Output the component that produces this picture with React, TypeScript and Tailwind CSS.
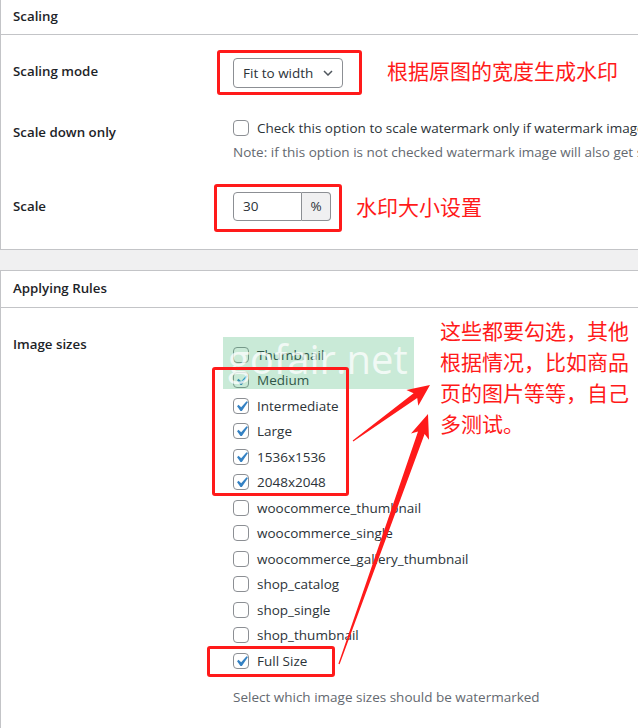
import React from "react";

const sizes = [
  { label: "Thumbnail", checked: false },
  { label: "Medium", checked: true },
  { label: "Intermediate", checked: true },
  { label: "Large", checked: true },
  { label: "1536x1536", checked: true },
  { label: "2048x2048", checked: true },
  { label: "woocommerce_thumbnail", checked: false },
  { label: "woocommerce_single", checked: false },
  { label: "woocommerce_gallery_thumbnail", checked: false },
  { label: "shop_catalog", checked: false },
  { label: "shop_single", checked: false },
  { label: "shop_thumbnail", checked: false },
  { label: "Full Size", checked: true },
];

const Checkbox = ({ checked }: { checked: boolean }) => (
  <span className="relative block w-[16px] h-[16px] shrink-0 rounded-[4px] border border-[#8c8f94] bg-white">
    {checked && (
      <svg viewBox="0 0 20 20" className="absolute -left-[3px] -top-[3px] w-[21px] h-[21px]">
        <path d="M14.83 4.89l1.34.94-5.81 8.38H9.02L5.78 9.67l1.34-1.25 2.57 2.4z" fill="#3582c4" />
      </svg>
    )}
  </span>
);

const RedBox = ({ className }: { className: string }) => (
  <div className={`absolute border-[3px] border-[#ff1a1a] rounded-[3px] ${className}`} />
);

const App = () => {
  return (
    <div className="relative w-[638px] h-[728px] overflow-hidden bg-[#f0f0f1] text-[#1d2327] font-['Open_Sans','Noto_Sans_CJK_SC',sans-serif]">
      {/* Scaling panel */}
      <div className="-mt-[2px] w-[700px] bg-white border border-[#c3c4c7]">
        <div className="h-[36px] flex items-center px-[12px] border-b border-[#c3c4c7] text-[13.3px] font-semibold">
          Scaling
        </div>

        <div className="flex">
          <div className="w-[232px] shrink-0 pl-[12px] pt-[26px] leading-[20px] text-[13.3px] font-semibold">Scaling mode</div>
          <div className="flex items-start pt-[23px] pb-[20px]">
            <div className="flex items-center justify-between w-[110px] h-[30px] pl-[9px] pr-[9px] rounded-[4px] border border-[#8c8f94] text-[13.5px] text-[#2c3338]">
              <span>Fit to width</span>
              <svg viewBox="0 0 10 6" className="w-[10px] h-[6px]">
                <polyline points="1,1 5,5 9,1" fill="none" stroke="#50575e" strokeWidth="1.5" />
              </svg>
            </div>
            <span className="ml-[44px] -mt-[3px] text-[21px] leading-[30px] text-[#ff1a1a] font-['Noto_Sans_CJK_SC',sans-serif]">
              根据原图的宽度生成水印
            </span>
          </div>
        </div>

        <div className="flex">
          <div className="w-[232px] shrink-0 pl-[12px] pt-[14px] leading-[20px] text-[13.3px] font-semibold">Scale down only</div>
          <div className="pt-[11px] pb-[8px]">
            <div className="flex items-center gap-[8px] h-[18px] text-[13.5px] text-[#2c3338] whitespace-nowrap">
              <Checkbox checked={false} />
              <span>Check this option to scale watermark only if watermark image is larger</span>
            </div>
            <div className="mt-[5px] leading-[20px] text-[13.5px] text-[#646970] whitespace-nowrap">
              Note: if this option is not checked watermark image will also get scaled
            </div>
          </div>
        </div>

        <div className="flex">
          <div className="w-[232px] shrink-0 pl-[12px] pt-[26px] leading-[20px] text-[13.3px] font-semibold">Scale</div>
          <div className="flex items-start pt-[22px] pb-[28px]">
            <div className="flex h-[29px] text-[13.5px] text-[#2c3338]">
              <div className="w-[69px] flex items-center pl-[9px] rounded-l-[4px] border border-[#8c8f94]">30</div>
              <div className="w-[29px] flex items-center justify-center rounded-r-[4px] border border-l-0 border-[#8c8f94] bg-[#f0f0f1]">%</div>
            </div>
            <span className="ml-[25px] -mt-[1px] text-[21px] leading-[30px] text-[#ff1a1a] font-['Noto_Sans_CJK_SC',sans-serif]">
              水印大小设置
            </span>
          </div>
        </div>
      </div>

      {/* Applying Rules panel */}
      <div className="mt-[20px] w-[700px] bg-white border border-[#c3c4c7]">
        <div className="h-[37px] flex items-center px-[12px] border-b border-[#c3c4c7] text-[13.3px] font-semibold">
          Applying Rules
        </div>
        <div className="flex">
          <div className="w-[232px] shrink-0 pl-[12px] pt-[26px] leading-[20px] text-[13.3px] font-semibold">Image sizes</div>
          <div className="pt-[34px] pb-[30px]">
            {sizes.map((s) => (
              <div key={s.label} className="flex items-center gap-[8px] h-[25.5px] text-[13.5px] text-[#2c3338]">
                <Checkbox checked={s.checked} />
                <span>{s.label}</span>
              </div>
            ))}
            <div className="mt-[13px] leading-[20px] text-[13.5px] text-[#646970]">
              Select which image sizes should be watermarked
            </div>
          </div>
        </div>
      </div>

      {/* watermark */}
      <div className="absolute left-[223px] top-[337px] w-[191px] h-[52px] bg-[rgba(60,180,110,0.28)] overflow-hidden">
        <span className="absolute left-[5px] -top-[6px] text-[40px] leading-[56px] text-white/75 font-['Open_Sans',sans-serif]">
          gofair.net
        </span>
      </div>

      {/* annotations */}
      <RedBox className="left-[217px] top-[50px] w-[145px] h-[45px]" />
      <RedBox className="left-[214px] top-[184px] w-[128px] h-[48px]" />
      <RedBox className="left-[212px] top-[367px] w-[137px] h-[129px]" />
      <RedBox className="left-[207px] top-[646px] w-[128px] h-[31px]" />

      <div className="absolute left-[440px] top-[315px] text-[21px] leading-[31px] text-[#ff1a1a] font-['Noto_Sans_CJK_SC',sans-serif] whitespace-nowrap">
        <div>这些都要勾选，其他</div>
        <div>根据情况，比如商品</div>
        <div>页的图片等等，自己</div>
        <div>多测试。</div>
      </div>

      <svg className="absolute left-0 top-0 w-[638px] h-[728px] pointer-events-none" viewBox="0 0 638 728">
        <polygon
          fill="#ff1a1a"
          points="352.7,440.6 413.6,393.2 406.4,389.9 430,385 418.3,405.8 417.2,398.0 353.3,441.4"
        />
        <polygon
          fill="#ff1a1a"
          points="338.4,663.8 418.0,431.6 411.0,433.4 428,414 429.0,439.8 424.6,434.0 339.6,664.2"
        />
      </svg>
    </div>
  );
};

export default App;
